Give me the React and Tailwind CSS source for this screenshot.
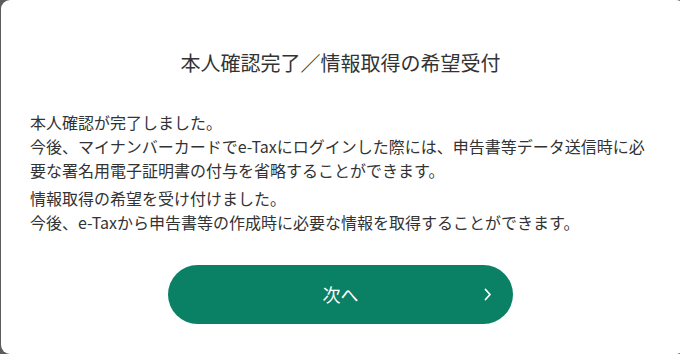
export default function App() {
  return (
    <div className="h-[354px] w-[680px] overflow-hidden bg-[#5c5c5c] pl-[1px]" style={{ fontFamily: '"Noto Sans CJK JP", "Noto Sans", sans-serif' }}>
      <div className="flex h-[354px] w-[684px] flex-col rounded-[9px] bg-white pl-[29px] pt-[49px] text-[#333333]">
        <h1 className="w-[621px] text-center text-[20px] leading-[28px] font-normal">本人確認完了／情報取得の希望受付</h1>
        <div className="mt-[33px] text-[16px] leading-[24px]">
          <p>本人確認が完了しました。</p>
          <p>今後、マイナンバーカードでe-Taxにログインした際には、申告書等データ送信時に必</p>
          <p>要な署名用電子証明書の付与を省略することができます。</p>
          <p className="mt-[4px]">情報取得の希望を受け付けました。</p>
          <p>今後、e-Taxから申告書等の作成時に必要な情報を取得することができます。</p>
        </div>
        <button className="relative ml-[138px] mt-[31px] flex h-[59px] w-[345px] items-center justify-center rounded-full bg-[#0a8065] text-[18px] text-white">
          <span>次へ</span>
          <svg className="absolute right-[21px] top-[23px]" width="8" height="13" viewBox="0 0 8 13" fill="none">
            <path d="M1.5 1.5 L6 6.5 L1.5 11.5" stroke="white" strokeWidth="1.8" strokeLinecap="round" strokeLinejoin="round" />
          </svg>
        </button>
      </div>
    </div>
  );
}
